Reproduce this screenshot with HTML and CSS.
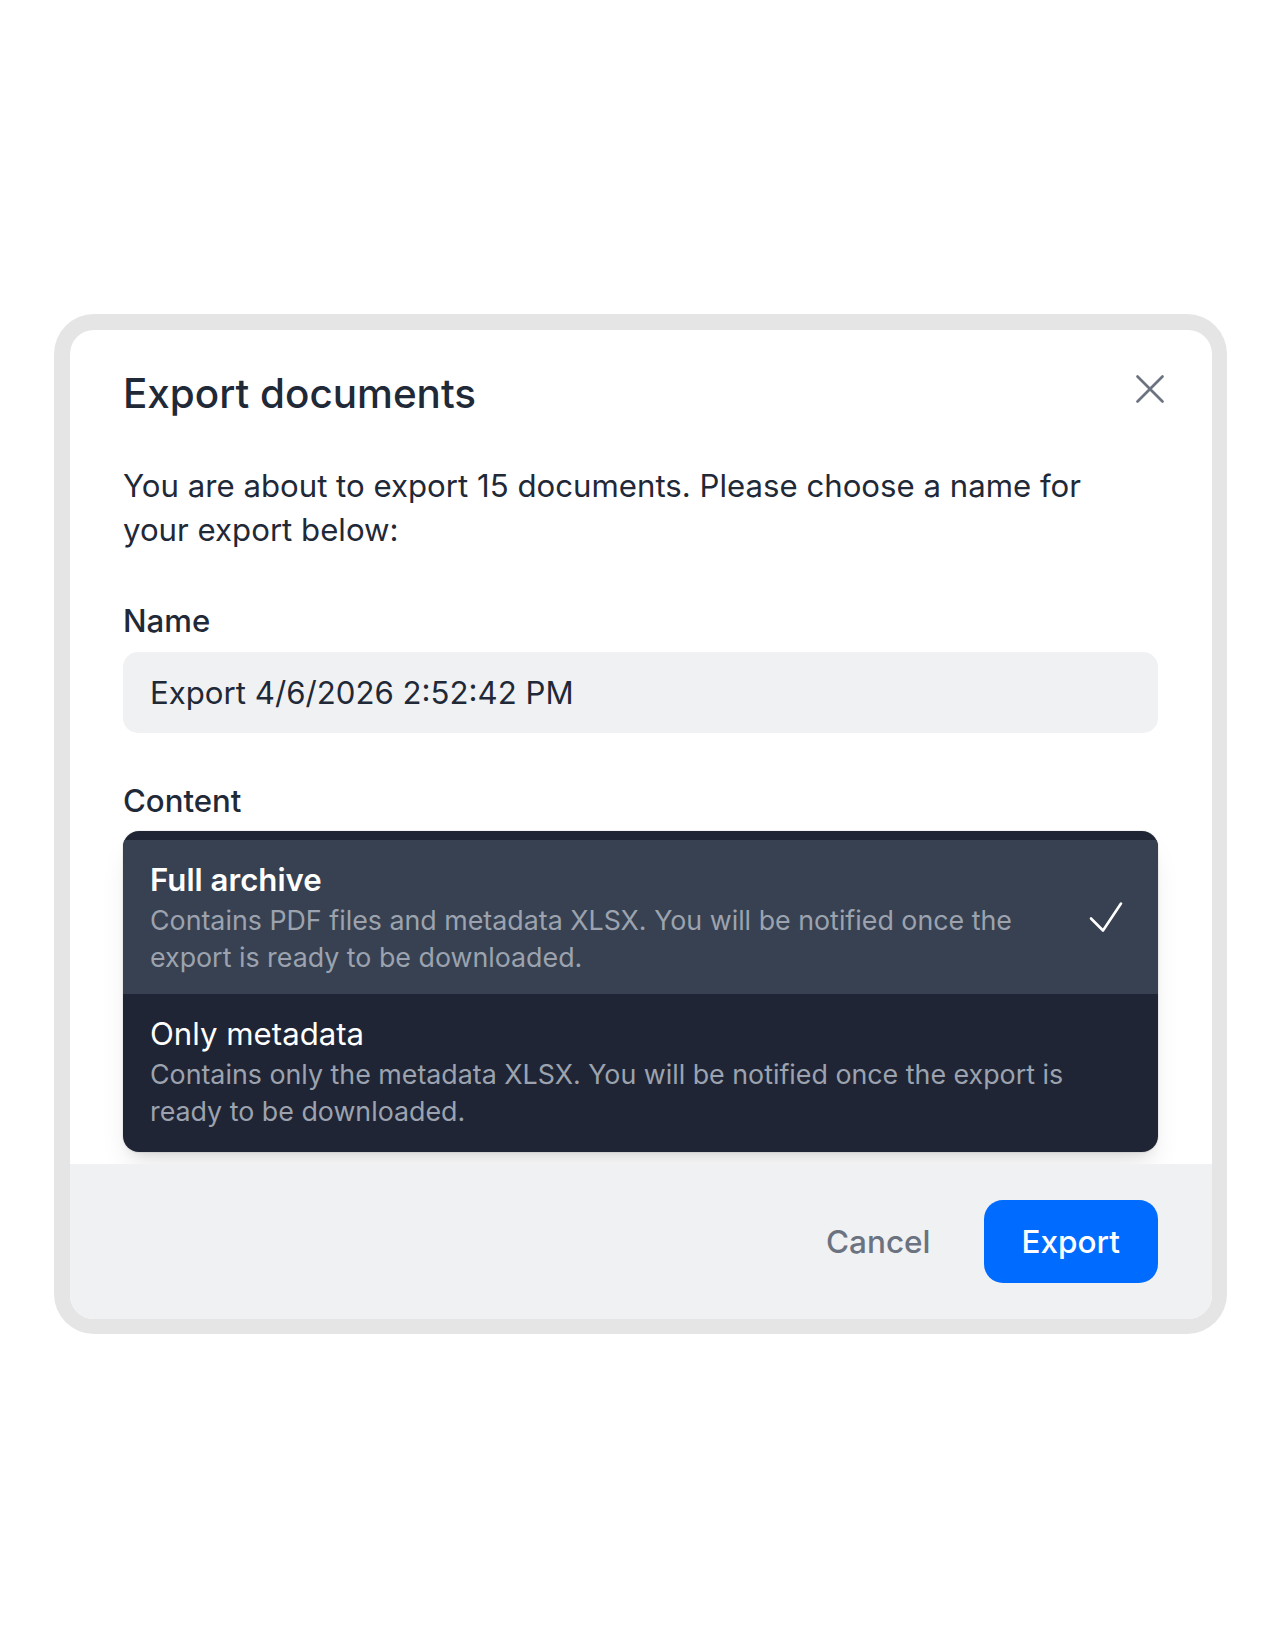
FILE: index.html
```html
<!DOCTYPE html>
<html lang="en">
<head>
<meta charset="utf-8">
<title>Export documents</title>
<link rel="stylesheet" href="styles.css">
</head>
<body>
<div class="page">
  <div class="frame">
    <div class="modal">
      <div class="modal-body">
        <div class="header">
          <h2 class="title">Export documents</h2>
          <button class="close" type="button" aria-label="Close">
            <svg viewBox="0 0 24 24" width="50" height="50" fill="none" stroke="currentColor" stroke-width="1.3" stroke-linecap="round" stroke-linejoin="round"><path d="M6 18L18 6M6 6l12 12"/></svg>
          </button>
        </div>
        <p class="intro">You are about to export 15 documents. Please choose a name for your export below:</p>
        <label class="label" for="name">Name</label>
        <div class="input" id="name">Export 4/6/2026 2:52:42 PM</div>
        <div class="label label-content">Content</div>
        <ul class="listbox">
          <li class="option selected">
            <div class="option-text">
              <div class="option-title">Full archive</div>
              <div class="option-desc">Contains PDF files and metadata XLSX. You will be notified once the export is ready to be downloaded.</div>
            </div>
            <svg class="check" viewBox="0 0 24 24" width="48" height="48" fill="none" stroke="currentColor" stroke-width="1.3" stroke-linecap="round" stroke-linejoin="round"><path d="M4.5 12.75l6 6 9-13.5"/></svg>
          </li>
          <li class="option">
            <div class="option-text">
              <div class="option-title">Only metadata</div>
              <div class="option-desc">Contains only the metadata XLSX. You will be notified once the export is ready to be downloaded.</div>
            </div>
            <span class="check-space"></span>
          </li>
        </ul>
      </div>
      <div class="footer">
        <button class="btn btn-cancel" type="button">Cancel</button>
        <button class="btn btn-primary" type="button">Export</button>
      </div>
    </div>
  </div>
</div>
</body>
</html>
```
FILE: styles.css
```css
* { box-sizing: border-box; }
html, body { margin: 0; padding: 0; background: #ffffff; }
body {
  font-family: Inter, "Noto Sans", "Liberation Sans", sans-serif;
  color: #1f2937;
  width: 1280px;
  height: 1648px;
}
.page {
  padding: 314px 53px 0 54px;
}
.frame {
  background: #e5e5e5;
  border-radius: 40px;
  padding: 16px 15px 15px 16px;
}
.modal {
  background: #ffffff;
  border-radius: 24px;
  overflow: hidden;
}
.modal-body {
  padding: 40px 54px 12px 53px;
}
.header {
  display: flex;
  justify-content: space-between;
  align-items: flex-start;
  height: 48px;
}
.title {
  margin: 0;
  font-size: 40.4px;
  line-height: 48px;
  font-weight: 500;
  color: #1f2937;
}
.close {
  border: 0;
  background: none;
  padding: 0;
  margin: -6px -17px 0 0;
  width: 50px;
  height: 50px;
  color: #6b7280;
  display: flex;
}
.intro {
  margin: 46px 0 0;
  padding-right: 24px;
  font-size: 31.2px;
  line-height: 44px;
  color: #1f2937;
}
.label {
  display: block;
  margin-top: 47px;
  font-size: 31.2px;
  line-height: 44px;
  font-weight: 500;
  color: #1f2937;
}
.label-content { margin-top: 46px; }
.input {
  margin-top: 9px;
  height: 81px;
  border-radius: 15px;
  background: #f0f1f3;
  padding: 0 27px;
  display: flex;
  align-items: center;
  font-size: 31.2px;
  line-height: 44px;
  color: #1f2937;
}
.listbox {
  list-style: none;
  margin: 8px 0 0;
  padding: 9px 0 4px;
  height: 321px;
  overflow: hidden;
  background: #1f2535;
  border-radius: 16px;
  box-shadow: 0 0 0 1px rgba(0,0,0,0.05), 0 18px 28px -6px rgba(0,0,0,0.10), 0 7px 11px -6px rgba(0,0,0,0.10);
}
.option {
  display: flex;
  align-items: center;
  gap: 8px;
  padding: 18px 28px 18.6px 27px;
  height: 154px;
}
.option.selected { background: #374151; }
.option-text { flex: 1; min-width: 0; }
.option-title {
  font-size: 31.2px;
  line-height: 44px;
  color: #ffffff;
  font-weight: 400;
}
.selected .option-title { font-weight: 600; }
.option-desc {
  font-size: 26.8px;
  line-height: 36.6px;
  color: #9ca3af;
}
.check {
  flex: none;
  color: #ffffff;
}
.check-space { flex: none; width: 48px; }
.footer {
  background: #f0f1f3;
  height: 155px;
  padding: 0 54px 0 53px;
  display: flex;
  justify-content: flex-end;
  align-items: center;
  gap: 15px;
}
.btn {
  font-family: inherit;
  border: 0;
  height: 83px;
  padding: 0 38px;
  border-radius: 19px;
  font-size: 31.5px;
  font-weight: 500;
  background: transparent;
  cursor: pointer;
}
.btn-cancel { color: #6b7280; }
.btn-primary { background: #006bff; color: #ffffff; }
```
